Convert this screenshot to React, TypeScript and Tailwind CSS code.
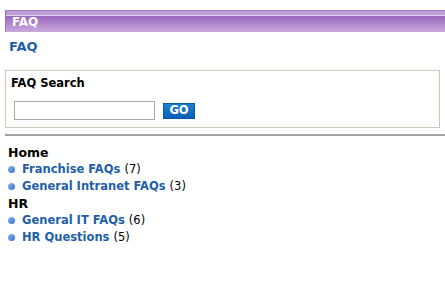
export default function App() {
  const groups = [
    {
      name: 'Home',
      items: [
        { title: 'Franchise FAQs', count: 7 },
        { title: 'General Intranet FAQs', count: 3 },
      ],
    },
    {
      name: 'HR',
      items: [
        { title: 'General IT FAQs', count: 6 },
        { title: 'HR Questions', count: 5 },
      ],
    },
  ]

  return (
    <div className="w-[445px] h-[308px] bg-white pt-[10px] pl-[5px] text-[11.5px] text-black font-['DejaVu_Sans',Verdana,sans-serif]">
      <div className="h-[22px] border-l border-[#9b70bf] flex flex-col">
        <div className="h-[5px] bg-[#bd9bd4] border-t border-[#a47ec4]" />
        <div className="h-px bg-[#e2d3ed]" />
        <div className="flex-1 bg-gradient-to-b from-[#9a67bd] to-[#caa9dd] flex items-center pl-[6px]">
          <span className="text-white font-bold text-[12px] leading-none -mt-[5px]">FAQ</span>
        </div>
      </div>

      <div className="pl-[4px] pt-[5px] h-[38px]">
        <a href="#" className="text-[#1f5fa8] font-bold text-[13px]">FAQ</a>
      </div>

      <div className="mr-[5px] h-[58px] border border-[#ccc9bb] pl-[5px] pt-[4px]">
        <div className="font-bold text-[11.5px]">FAQ Search</div>
        <div className="flex items-center gap-[8px] mt-[9px] pl-[3px]">
          <input type="text" className="w-[141px] h-[19px] border border-[#a8a8a8] bg-white outline-none" />
          <button className="w-[32px] h-[16px] bg-gradient-to-b from-[#1d7fd6] to-[#0a5fb4] border border-[#0a5aa8] text-white font-bold text-[11.5px] leading-none">
            GO
          </button>
        </div>
      </div>

      <div className="mt-[6px] h-[2px] bg-[#a3a3a3]" />

      <div className="pl-[3px] pt-[8px]">
        {groups.map((g) => (
          <div key={g.name}>
            <div className="font-bold text-[12.5px] leading-[17px]">{g.name}</div>
            {g.items.map((it) => (
              <div key={it.title} className="flex items-center h-[17px]">
                <span className="w-[7px] h-[7px] rounded-full bg-gradient-to-br from-[#8fb6f0] to-[#2f6fd2] mr-[7px]" />
                <a href="#" className="text-[#1f5fa8] font-bold">{it.title}</a>
                <span className="ml-[4px]">({it.count})</span>
              </div>
            ))}
          </div>
        ))}
      </div>
    </div>
  )
}
